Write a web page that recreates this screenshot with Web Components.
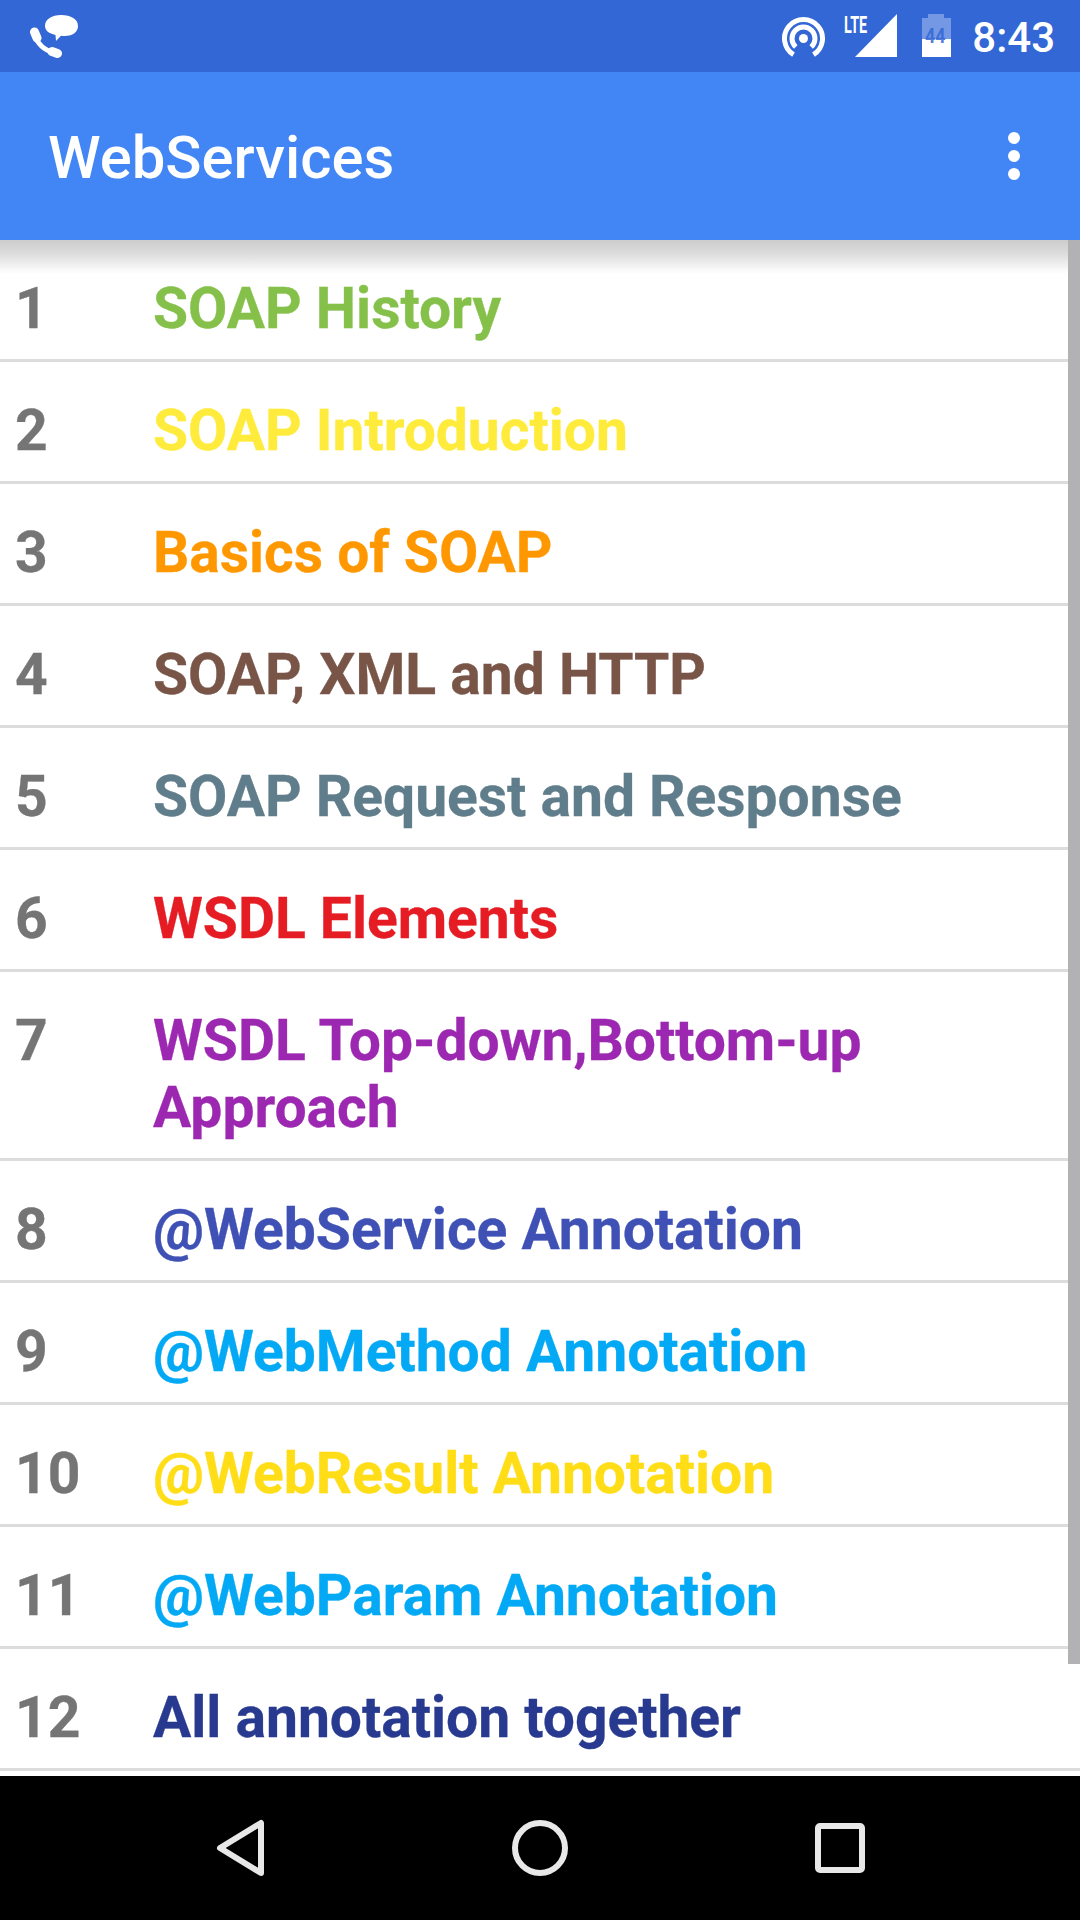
<!DOCTYPE html>
<html><head><meta charset="utf-8"><style>
html,body{margin:0;padding:0;background:#fff}
body{width:1080px;height:1920px;overflow:hidden;font-family:Roboto,"Liberation Sans",sans-serif}
</style></head><body>
<template id="t-screen"><style>
:host{display:flex;flex-direction:column;width:1080px;height:1920px;position:relative;overflow:hidden;background:#fff}
.list{flex:1;min-height:0;position:relative;overflow:hidden}
.inner{display:flex;flex-direction:column}
.bar{position:absolute;right:0;top:0;width:12px;height:1424px;background:#b2b2b4}
.shadow{position:absolute;left:0;right:0;top:0;height:34px;background:linear-gradient(#cdcdcd,#dcdcdc 40%,#f4f4f4 80%,rgba(255,255,255,0));}
</style>
<slot name="status"></slot><slot name="appbar"></slot>
<div class="list"><div class="inner"><slot></slot></div><div class="shadow"></div><div class="bar"></div></div>
<slot name="nav"></slot></template>

<template id="t-status"><style>
:host{display:flex;align-items:center;height:72px;background:#3367d6;color:#fff;flex:none}
.l{margin-left:30px;margin-top:1px;display:flex}
.sp{flex:1}
.t{font:500 42px/72px Roboto,sans-serif;margin-right:25px;margin-left:15px;color:#fff;padding-top:2px;height:70px}
svg{display:block}
.r{display:flex;align-items:center;position:relative;height:72px}
.lte{position:absolute;left:62px;top:12px;font:700 24px/26px Roboto,sans-serif;transform:scaleX(.6);transform-origin:0 0;color:#fff}
.num{position:absolute;left:143px;top:24px;font:700 21px/24px Roboto,sans-serif;color:#3367d6;transform:scaleX(.85);transform-origin:0 0;opacity:.85}
</style>
<div class="l"><svg width="48" height="43" viewBox="0 0 48 43" fill="#fff"><path d="M5 20C7 28 14 35 25 38.500" fill="none" stroke="#fff" stroke-width="5"/><path d="M4.500 17L7 23M22 36.500L27.500 38.500" fill="none" stroke="#fff" stroke-width="9" stroke-linecap="round"/><path d="M31 0C41 0 48 4 48 11C48 18 41 21 35 21C33.500 21 32.500 21 31 20.800L26 26L25.500 20C19 18.500 15 15.500 15 11C15 4 22 0 31 0Z"/></svg></div>
<div class="sp"></div>
<div class="r"><svg width="175" height="72" viewBox="0 0 175 72" fill="none">
<g stroke="#fff" stroke-width="5"><path d="M11.500 54.700A19 19 0 1 1 31.500 54.700"/><path d="M13.800 47A11.500 11.500 0 1 1 29.200 47"/></g><circle cx="21.500" cy="38.500" r="4.500" fill="#fff"/>
<path d="M73 57L115 14V57Z" fill="#fff"/>
<path d="M146 14H162V18H169V39H140V18H146Z" fill="#fff" opacity=".32"/>
<path d="M140 39H169V57H140Z" fill="#fff"/>
</svg><span class="lte">LTE</span><span class="num">44</span></div>
<span class="t">8:43</span></template>

<template id="t-appbar"><style>
:host{display:flex;align-items:center;height:168px;background:#4285f4;flex:none;position:relative;z-index:1}
.t{flex:1;margin-left:48px;font:500 59.800px/172px Roboto,sans-serif;color:#fff;height:168px}
.m{display:flex;flex-direction:column;gap:6px;margin-right:60px}
i{display:block;width:12px;height:12px;border-radius:50%;background:#fff}
</style><span class="t"><slot></slot></span><div class="m"><i></i><i></i><i></i></div></template>

<template id="t-row"><style>
:host{display:flex;align-items:flex-start;border-bottom:3px solid #dcdcdc;box-sizing:border-box;min-height:122px;padding:35px 0 17px;font:700 57px/67px Roboto,sans-serif;letter-spacing:-.03px;-webkit-text-stroke:.3px currentColor}
.n{width:153px;padding-left:15px;box-sizing:border-box;color:#757575;flex:none}
.x{color:var(--c);flex:1;padding-right:160px}
</style><span class="n"><slot name="n"></slot></span><span class="x"><slot></slot></span></template>

<template id="t-nav"><style>
:host{display:flex;height:144px;background:#000;flex:none;align-items:center;justify-content:center}
svg{display:block}
</style><svg width="1080" height="144" viewBox="0 0 1080 144" fill="none" stroke="#e8e8e8" stroke-width="6"><path d="M261 47V97L220 72Z" stroke-linejoin="round"/><circle cx="540" cy="72" r="25"/><rect x="818" y="50" width="44" height="44" rx="2"/></svg></template>

<script>
function def(name,tid){customElements.define(name,class extends HTMLElement{constructor(){super();this.attachShadow({mode:'open'}).appendChild(document.getElementById(tid).content.cloneNode(true));}
connectedCallback(){const c=this.getAttribute('c');if(c)this.style.setProperty('--c',c);}})}
def('app-screen','t-screen');def('status-bar','t-status');def('app-bar','t-appbar');def('topic-row','t-row');def('nav-bar','t-nav');
</script>
<app-screen>
<status-bar slot="status"></status-bar>
<app-bar slot="appbar">WebServices</app-bar>
<topic-row c="#85c14a"><span slot="n">1</span>SOAP History</topic-row>
<topic-row c="#ffeb3b"><span slot="n">2</span>SOAP Introduction</topic-row>
<topic-row c="#ff9800"><span slot="n">3</span>Basics of SOAP</topic-row>
<topic-row c="#795548"><span slot="n">4</span>SOAP, XML and HTTP</topic-row>
<topic-row c="#607d8b"><span slot="n">5</span>SOAP Request and Response</topic-row>
<topic-row c="#e51c23"><span slot="n">6</span>WSDL Elements</topic-row>
<topic-row c="#9c27b0"><span slot="n">7</span>WSDL Top-down,Bottom-up Approach</topic-row>
<topic-row c="#3f51b5"><span slot="n">8</span>@WebService Annotation</topic-row>
<topic-row c="#03a9f4"><span slot="n">9</span>@WebMethod Annotation</topic-row>
<topic-row c="#ffdd17"><span slot="n">10</span>@WebResult Annotation</topic-row>
<topic-row c="#03a9f4"><span slot="n">11</span>@WebParam Annotation</topic-row>
<topic-row c="#283a8f"><span slot="n">12</span>All annotation together</topic-row>
<nav-bar slot="nav"></nav-bar>
</app-screen>
</body></html>
